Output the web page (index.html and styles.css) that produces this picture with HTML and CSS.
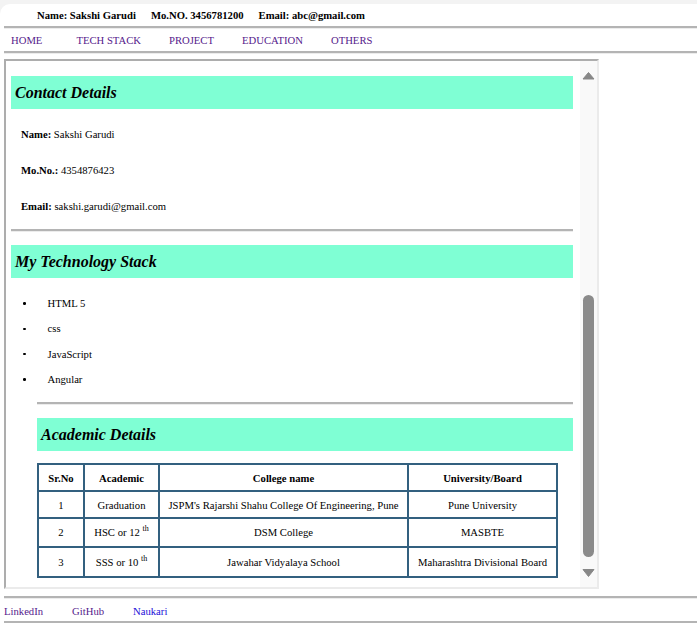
FILE: index.html
```html
<!DOCTYPE html>
<html>
<head>
<meta charset="utf-8">
<title>Sakshi Garudi</title>
<link rel="stylesheet" href="styles.css">
</head>
<body>
<div class="page">
  <div class="top">
    <span>Name: Sakshi Garudi</span>
    <span>Mo.NO. 3456781200</span>
    <span>Email: abc@gmail.com</span>
  </div>
  <div class="rule"></div>
  <nav class="nav">
    <a class="visited first">HOME</a>
    <a class="visited">TECH STACK</a>
    <a class="visited">PROJECT</a>
    <a class="visited">EDUCATION</a>
    <a class="visited">OTHERS</a>
  </nav>
  <div class="rule"></div>
  <div class="frame">
    <div class="content">
      <h2 class="bar">Contact Details</h2>
      <div class="contact">
        <p><b>Name:</b> Sakshi Garudi</p>
        <p><b>Mo.No.:</b> 4354876423</p>
        <p><b>Email:</b> sakshi.garudi@gmail.com</p>
      </div>
      <div class="hr"></div>
      <h2 class="bar bar-gap">My Technology Stack</h2>
      <ul class="stack">
        <li>HTML 5</li>
        <li>css</li>
        <li>JavaScript</li>
        <li>Angular</li>
      </ul>
      <div class="edu">
        <div class="hr"></div>
        <h2 class="bar bar-gap">Academic Details</h2>
        <table class="acad">
          <colgroup>
            <col class="c1"><col class="c2"><col class="c3"><col class="c4">
          </colgroup>
          <tr class="r0"><th>Sr.No</th><th>Academic</th><th>College name</th><th>University/Board</th></tr>
          <tr class="r1"><td>1</td><td>Graduation</td><td>JSPM's Rajarshi Shahu College Of Engineering, Pune</td><td>Pune University</td></tr>
          <tr class="r2"><td>2</td><td>HSC or 12 <sup>th</sup></td><td>DSM College</td><td>MASBTE</td></tr>
          <tr class="r3"><td>3</td><td>SSS or 10 <sup>th</sup></td><td>Jawahar Vidyalaya School</td><td>Maharashtra Divisional Board</td></tr>
        </table>
      </div>
    </div>
    <div class="scrollbar">
      <svg class="arrow" width="17" height="22" viewBox="0 0 17 22"><polygon points="3,18 14,18 8.5,11.5" fill="#878787" stroke="#878787" stroke-width="1" stroke-linejoin="round"/></svg>
      <div class="track-top"></div>
      <div class="thumb"></div>
      <div class="track-rest"></div>
      <svg class="arrow" width="17" height="22" viewBox="0 0 17 22"><polygon points="3,4.5 14,4.5 8.5,11.5" fill="#878787" stroke="#878787" stroke-width="1" stroke-linejoin="round"/></svg>
    </div>
  </div>
  <div class="rule foot-rule"></div>
  <div class="footer">
    <a class="visited">LinkedIn</a>
    <a class="visited">GitHub</a>
    <a class="link">Naukari</a>
  </div>
  <div class="rule"></div>
</div>
</body>
</html>
```

FILE: styles.css
```css
html, body {
  margin: 0;
  padding: 0;
}
body {
  background: #f3f3f3;
  font-family: "Liberation Serif", "Times New Roman", serif;
  font-size: 10.67px;
  color: #000;
}
.page {
  margin-top: 4px;
  height: 619px;
  background: #fff;
  border-top-left-radius: 10px;
  overflow: hidden;
}
.top {
  height: 22px;
  line-height: 22px;
  padding-left: 37px;
  display: flex;
  gap: 15px;
  font-weight: bold;
}
.rule {
  margin-left: 4px;
  height: 0;
  border-top: 2px solid #b4b4b4;
  border-bottom: 1px solid #ececec;
}
.nav {
  height: 22px;
  line-height: 22px;
  padding-left: 11px;
  display: flex;
  gap: 28px;
}
.nav .first {
  margin-right: 6px;
}
.visited {
  color: #551a8b;
}
.link {
  color: #1a0dd8;
}
.frame {
  margin: 5px 0 0 4px;
  width: 591px;
  height: 526px;
  border-top: 2px solid #adadad;
  border-left: 2px solid #adadad;
  border-right: 2px solid #ebebeb;
  border-bottom: 2px solid #ebebeb;
  display: flex;
  overflow: hidden;
}
.content {
  flex: 1;
  padding: 15px 7px 0 5px;
  overflow: hidden;
}
.bar {
  margin: 0;
  height: 33px;
  line-height: 33px;
  padding-left: 4px;
  background: #7fffd4;
  font-size: 16px;
  font-style: italic;
  font-weight: bold;
}
.bar-gap {
  margin-top: 13px;
}
.contact {
  padding: 19px 0 0 10px;
}
.contact p {
  margin: 0;
  line-height: 12px;
}
.contact p + p {
  margin-top: 24px;
}
.hr {
  margin-top: 17px;
  height: 0;
  border-top: 2px solid #b4b4b4;
  border-bottom: 1px solid #ececec;
}
.stack {
  margin: 19px 0 0 0;
  padding: 0;
  list-style: none;
}
.stack li {
  display: flex;
  align-items: center;
  line-height: 12px;
  height: 12px;
  margin-bottom: 13.33px;
}
.stack li::before {
  content: "";
  width: 2.5px;
  height: 2.5px;
  border-radius: 50%;
  background: #000;
  margin: 1px 22px 0 12px;
}
.edu {
  margin-left: 26px;
}
.edu .hr {
  margin-top: 17px;
}
.acad {
  margin-top: 12.5px;
  border-collapse: collapse;
  table-layout: fixed;
  width: 521px;
  border: 2px solid #234f70;
}
.acad .c1 { width: 46px; }
.acad .c2 { width: 75px; }
.acad .c3 { width: 249px; }
.acad .c4 { width: 149px; }
.acad th, .acad td {
  border: 2px solid #33607f;
  padding: 0;
  text-align: center;
  line-height: 12px;
  white-space: nowrap;
}
.acad th {
  font-weight: bold;
}
.acad .r0 { height: 27px; }
.acad .r1 { height: 26.5px; }
.acad .r2 { height: 29px; }
.acad .r3 { height: 30px; }
.acad sup {
  font-size: 8px;
  line-height: 0;
  vertical-align: 5px;
}
.scrollbar {
  width: 17px;
  background: #f9f9f9;
  display: flex;
  flex-direction: column;
}
.arrow {
  display: block;
  flex: none;
}
.track-top {
  height: 212px;
  flex: none;
}
.thumb {
  height: 262px;
  width: 11px;
  margin-left: 3px;
  border-radius: 6px;
  background: #8b8b8b;
  flex: none;
}
.track-rest {
  flex: 1;
}
.foot-rule {
  margin-top: 7px;
}
.footer {
  height: 20px;
  line-height: 20px;
  padding: 2px 0 0 4px;
  display: flex;
  gap: 29px;
}
```
